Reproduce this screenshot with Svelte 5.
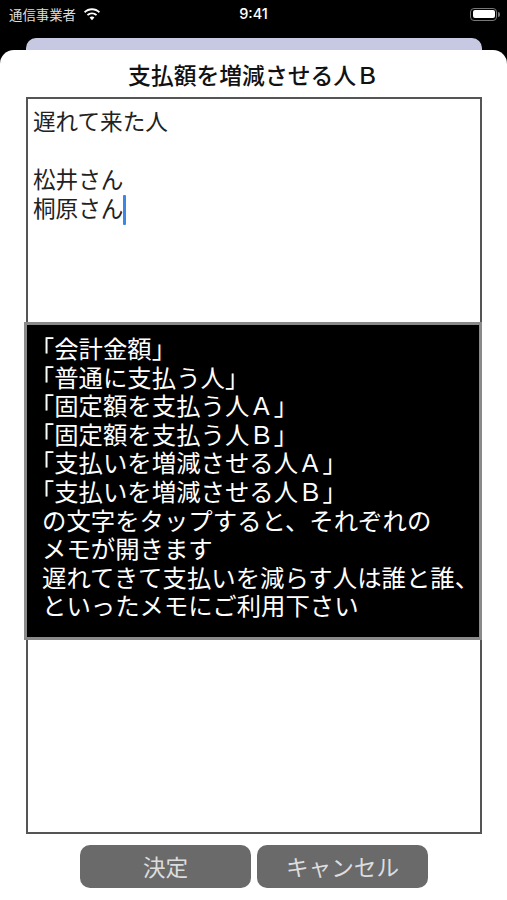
<script>
	let title = '支払額を増減させる人Ｂ';
	let lines = ['遅れて来た人', '', '松井さん', '桐原さん'];
	let help = [
		'「会計金額」',
		'「普通に支払う人」',
		'「固定額を支払う人Ａ」',
		'「固定額を支払う人Ｂ」',
		'「支払いを増減させる人Ａ」',
		'「支払いを増減させる人Ｂ」',
		'の文字をタップすると、それぞれの',
		'メモが開きます',
		'遅れてきて支払いを減らす人は誰と誰、',
		'といったメモにご利用下さい'
	];
</script>

<main class="screen">
	<header class="status">
		<div class="left">
			<span class="carrier">通信事業者</span>
			<svg class="wifi" viewBox="0 0 18 13" width="18" height="13">
				<path d="M9 2.2c2.6 0 5 1 6.8 2.7l1.2-1.3C14.9 1.5 12.1.3 9 .3S3.1 1.5 1 3.6l1.2 1.3C4 3.2 6.4 2.2 9 2.2z" fill="#fff" />
				<path d="M9 6.3c1.5 0 2.9.6 3.9 1.5l1.3-1.3C12.8 5.2 11 4.4 9 4.4s-3.8.8-5.2 2.1l1.3 1.3c1-.9 2.4-1.5 3.9-1.5z" fill="#fff" />
				<path d="M9 8.5c-1 0-1.8.4-2.4 1L9 12.2l2.4-2.7c-.6-.6-1.4-1-2.4-1z" fill="#fff" />
			</svg>
		</div>
		<span class="time">9:41</span>
		<div class="right">
			<span class="battery"><span class="level"></span></span>
			<span class="cap"></span>
		</div>
	</header>

	<div class="behind"></div>

	<section class="sheet">
		<h1>{title}</h1>
		<div class="memo">
			{#each lines as line, i}
				<div class="line">{line}{#if i === lines.length - 1}<span class="caret"></span>{/if}</div>
			{/each}
			<div class="help">
				{#each help as row}
					<div>{row}</div>
				{/each}
			</div>
		</div>
		<div class="actions">
			<button>決定</button>
			<button>キャンセル</button>
		</div>
	</section>
</main>

<style>
	:global(body) {
		background: #000;
	}

	.screen {
		width: 507px;
		height: 900px;
		background: #000;
		display: flex;
		flex-flow: column;
		overflow: hidden;
		font-family: 'Noto Sans CJK JP', 'Noto Sans', sans-serif;
	}

	.status {
		height: 38px;
		flex: none;
		box-sizing: border-box;
		padding: 5px 7px 0 7px;
		display: grid;
		grid-template-columns: 1fr auto 1fr;
		align-items: start;
		color: #fff;
	}

	.left {
		display: flex;
		align-items: center;
		gap: 7px;
		height: 18px;
		padding-left: 2px;
	}

	.carrier {
		font-size: 13.4px;
		line-height: 18px;
		color: #ddd;
	}

	.time {
		font-family: Inter, 'Liberation Sans', sans-serif;
		font-size: 14.5px;
		font-weight: 500;
		line-height: 18px;
	}

	.right {
		display: flex;
		justify-content: flex-end;
		align-items: center;
		height: 18px;
		gap: 1px;
	}

	.battery {
		width: 27px;
		height: 13px;
		box-sizing: border-box;
		border: 1px solid #777;
		border-radius: 4px;
		padding: 1.5px;
		display: flex;
	}

	.level {
		flex: 1;
		background: #fff;
		border-radius: 2px;
	}

	.cap {
		width: 2px;
		height: 5px;
		background: #777;
		border-radius: 0 2px 2px 0;
	}

	.behind {
		flex: none;
		height: 12px;
		margin: 0 25px 0 26px;
		background: #c7c9e3;
		border-radius: 10px 10px 0 0;
	}

	.sheet {
		flex: 1;
		display: flex;
		flex-flow: column;
		background: #fff;
		border-radius: 14px 14px 0 0;
	}

	h1 {
		margin: 0;
		height: 47px;
		flex: none;
		box-sizing: border-box;
		padding-top: 9px;
		text-align: center;
		font-size: 22.8px;
		font-weight: 500;
		line-height: 32px;
		color: #111;
	}

	.memo {
		position: relative;
		height: 737px;
		flex: none;
		margin: 0 25px 0 26px;
		box-sizing: border-box;
		border: 2px solid #555;
		padding: 7px 5px;
		font-size: 22.6px;
		line-height: 29px;
		color: #222;
	}

	.line {
		height: 29px;
		white-space: nowrap;
	}

	.caret {
		display: inline-block;
		width: 2.5px;
		height: 30px;
		background: #3d87e0;
		vertical-align: -8px;
		border-radius: 1px;
	}

	.help {
		position: absolute;
		left: -4px;
		right: -2px;
		top: 223px;
		height: 318px;
		box-sizing: border-box;
		background: #000;
		border: 3px solid #8a8a8a;
		padding: 9px 0 0 15px;
		font-size: 24.4px;
		line-height: 28.6px;
		color: #fff;
		white-space: nowrap;
		text-spacing-trim: trim-start;
	}

	.actions {
		display: flex;
		justify-content: center;
		gap: 6px;
		margin-top: 11px;
		padding-left: 1px;
	}

	button {
		width: 171px;
		height: 43px;
		border: none;
		border-radius: 10px;
		background: #6a6a6a;
		color: #ddd;
		font: inherit;
		font-size: 22.6px;
		line-height: 30px;
		padding: 0;
	}
</style>
